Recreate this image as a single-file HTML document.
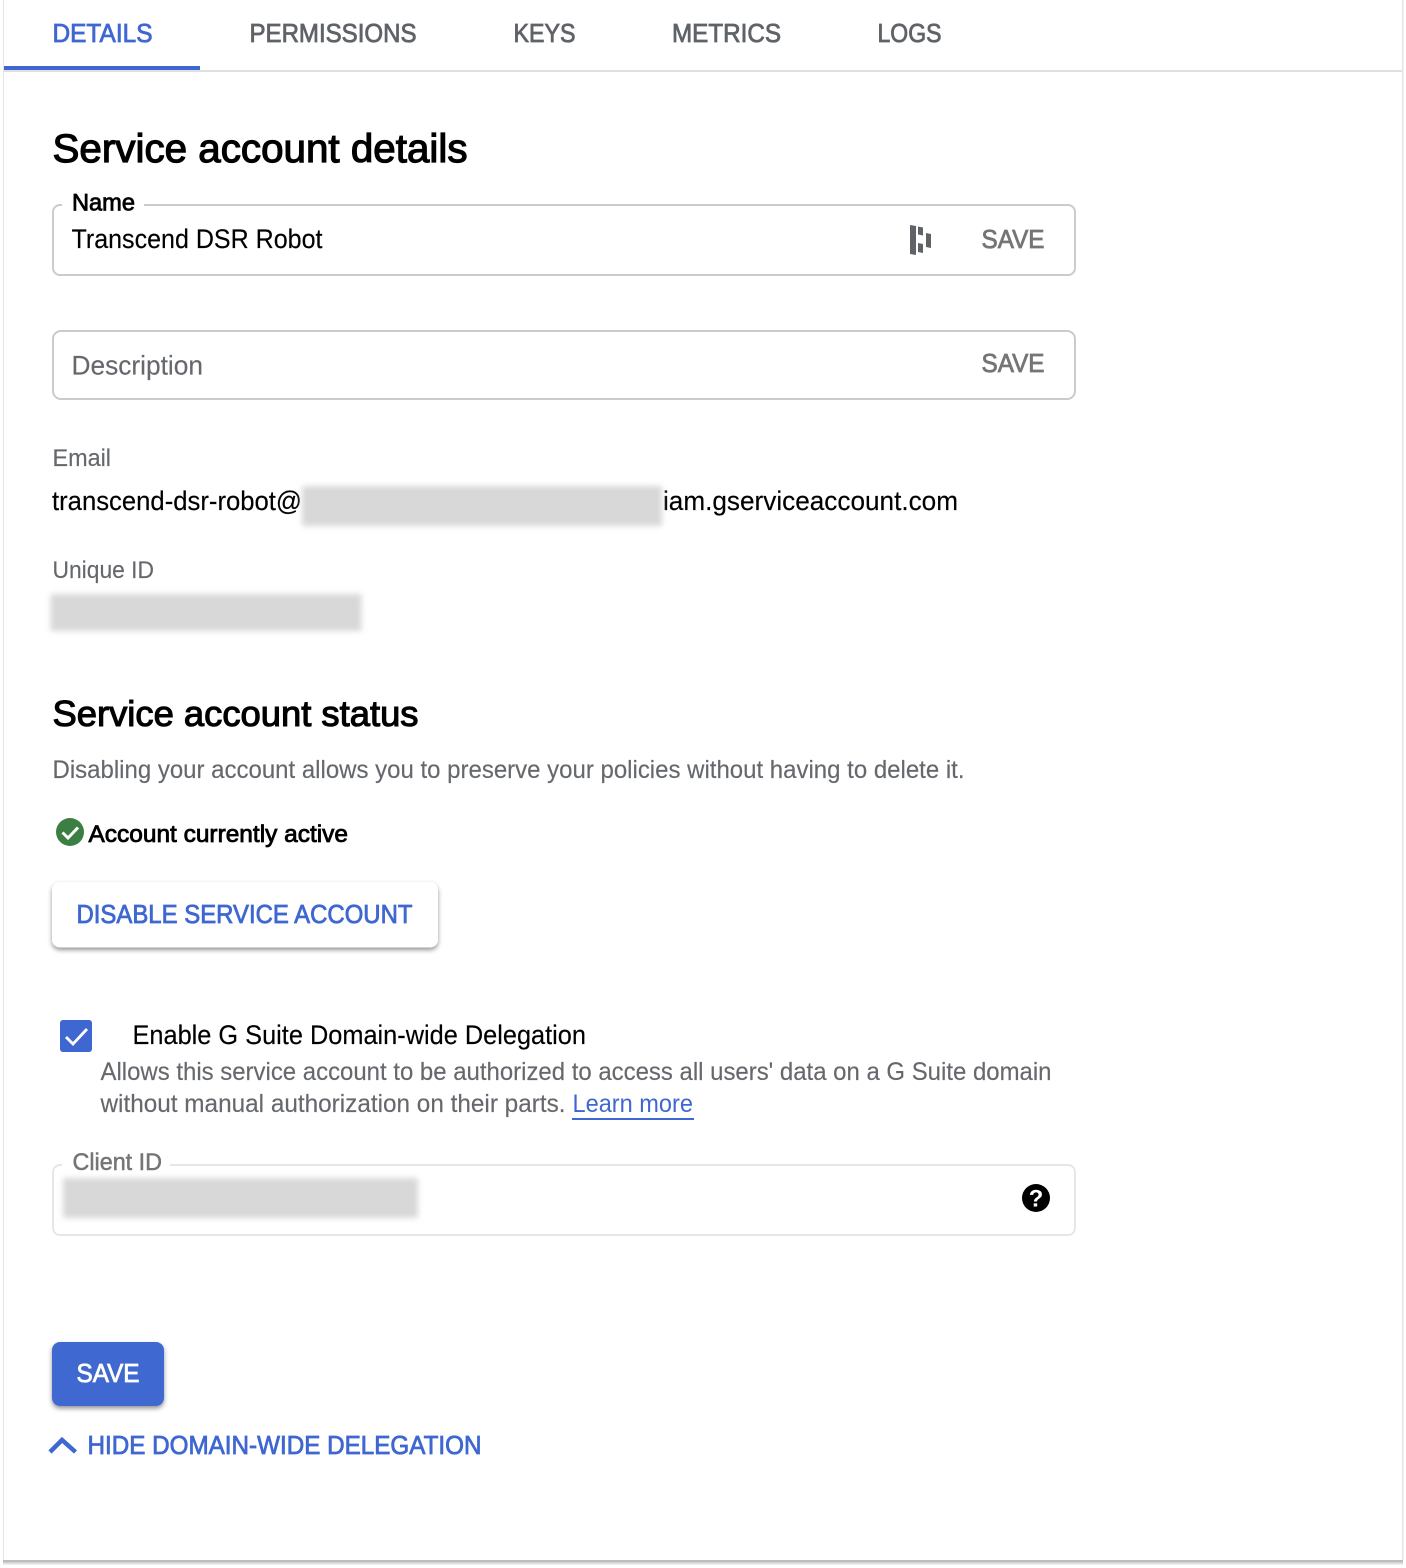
<!DOCTYPE html>
<html><head><meta charset="utf-8"><title>Service account details</title>
<style>
html,body{margin:0;padding:0;background:#fff;width:1406px;height:1568px;overflow:hidden}
svg{display:block;position:absolute;left:0;top:0}
text{font-family:"Liberation Sans",Arial,sans-serif;font-size:25px;fill:#000}
.m{stroke-width:.8px;paint-order:stroke}
.blue{fill:#3f67d1;stroke:#3f67d1}
.grey{fill:#5f6368;stroke:#5f6368}
.g2{fill:#65686c;stroke:#65686c;stroke-width:.15px}
.g3{fill:#757575;stroke:#757575}
.blk{stroke:#000}
.wht{fill:#fff;stroke:#fff}
</style></head><body>
<svg width="1406" height="1568" viewBox="0 0 1406 1568" xmlns="http://www.w3.org/2000/svg">
<defs>
<filter id="b" x="-10%" y="-40%" width="120%" height="180%"><feGaussianBlur stdDeviation="2.8"/></filter>
<filter id="s1" x="-10%" y="-30%" width="120%" height="170%"><feDropShadow dx="0" dy="2.500" stdDeviation="2.500" flood-color="#000" flood-opacity=".42"/></filter>
</defs>
<rect width="1406" height="1568" fill="#fff"/>
<!-- frame -->
<rect x="3" y="0" width="1" height="1560" fill="#e4e4e4"/>
<rect x="1402" y="0" width="1.5" height="1560" fill="#e4e4e4"/>
<rect x="3" y="1560" width="1400" height="2" fill="#bdbdbd"/>
<rect x="3" y="1562" width="1400" height="1.5" fill="#d2d2d2"/>
<rect x="3" y="1563.500" width="1400" height="1.5" fill="#efefef"/>
<!-- tabs -->
<rect x="4" y="70" width="1398" height="2" fill="#e0e0e0"/>
<rect x="4" y="66" width="196" height="4" fill="#3f67d1"/>
<text class="m blue" x="52.500" y="42" style="font-size:26px" textLength="100" lengthAdjust="spacingAndGlyphs">DETAILS</text>
<text class="m grey" x="249.500" y="42" style="font-size:26px" textLength="167" lengthAdjust="spacingAndGlyphs">PERMISSIONS</text>
<text class="m grey" x="513.500" y="42" style="font-size:26px" textLength="62" lengthAdjust="spacingAndGlyphs">KEYS</text>
<text class="m grey" x="672" y="42" style="font-size:26px" textLength="109" lengthAdjust="spacingAndGlyphs">METRICS</text>
<text class="m grey" x="877.500" y="42" style="font-size:26px" textLength="64" lengthAdjust="spacingAndGlyphs">LOGS</text>
<!-- details -->
<text class="m blk" x="52.500" y="162" style="font-size:40px;stroke-width:1.2px" textLength="415" lengthAdjust="spacingAndGlyphs">Service account details</text>
<!-- name field -->
<path d="M62 205H60a7 7 0 0 0-7 7v56a7 7 0 0 0 7 7H1068a7 7 0 0 0 7-7V212a7 7 0 0 0-7-7H144" fill="none" stroke="#cbcbcb" stroke-width="2"/>
<text class="m blk" x="72" y="210.500" style="font-size:24px" textLength="63" lengthAdjust="spacingAndGlyphs">Name</text>
<text x="71.500" y="248" style="font-size:26.500px;stroke:#000;stroke-width:.15px" textLength="251" lengthAdjust="spacingAndGlyphs">Transcend DSR Robot</text>
<path d="M910 225l6 1v29l-6-1zM918 226.500l5 1v8l-5-1zM918 243l5 1v9l-5-1zM926 233l5 1v14l-5-1z" fill="#5f6368"/>
<text class="m g3" x="981.500" y="248" style="font-size:26px" textLength="63" lengthAdjust="spacingAndGlyphs">SAVE</text>
<!-- description -->
<rect x="53" y="331" width="1022" height="68" rx="8" fill="none" stroke="#cbcbcb" stroke-width="2"/>
<text class="g2" x="71.500" y="374.500" style="font-size:26.500px" textLength="131.500" lengthAdjust="spacingAndGlyphs">Description</text>
<text class="m g3" x="981.500" y="372" style="font-size:26px" textLength="63" lengthAdjust="spacingAndGlyphs">SAVE</text>
<!-- email -->
<text class="g2" x="52.500" y="466" style="font-size:24px" textLength="58.500" lengthAdjust="spacingAndGlyphs">Email</text>
<text x="52" y="510" style="font-size:26.500px;stroke:#000;stroke-width:.15px" textLength="250" lengthAdjust="spacingAndGlyphs">transcend-dsr-robot@</text>
<text x="663" y="510" style="font-size:26.500px;stroke:#000;stroke-width:.15px" textLength="295" lengthAdjust="spacingAndGlyphs">iam.gserviceaccount.com</text>
<rect x="302" y="486" width="360" height="40" fill="#d8d8d8" filter="url(#b)"/>
<!-- unique id -->
<text class="g2" x="52.500" y="578" style="font-size:24px" textLength="101.500" lengthAdjust="spacingAndGlyphs">Unique ID</text>
<rect x="50.500" y="594" width="311" height="37" fill="#d8d8d8" filter="url(#b)"/>
<!-- status -->
<text class="m blk" x="52.500" y="726" style="font-size:36px;stroke-width:1.1px" textLength="366" lengthAdjust="spacingAndGlyphs">Service account status</text>
<text class="g2" x="52.500" y="778" style="font-size:25px" textLength="912" lengthAdjust="spacingAndGlyphs">Disabling your account allows you to preserve your policies without having to delete it.</text>
<circle cx="70" cy="832" r="14" fill="#3c7f43"/>
<path d="M62.500 832.500l5.500 5.500 10-10.500" fill="none" stroke="#fff" stroke-width="3"/>
<text class="m blk" x="88.500" y="842" style="font-size:24px" textLength="259.500" lengthAdjust="spacingAndGlyphs">Account currently active</text>
<!-- disable button -->
<rect x="52" y="882" width="386" height="65.500" rx="8" fill="#fff" filter="url(#s1)"/>
<text class="m blue" x="76.500" y="923" style="font-size:26px" textLength="336" lengthAdjust="spacingAndGlyphs">DISABLE SERVICE ACCOUNT</text>
<!-- delegation -->
<rect x="60" y="1020" width="32" height="32" rx="3" fill="#3f67d1"/>
<path d="M66 1037l7 7 14-15" fill="none" stroke="#fff" stroke-width="2.800"/>
<text x="132.500" y="1044" style="font-size:26.500px;stroke:#000;stroke-width:.15px" textLength="453.500" lengthAdjust="spacingAndGlyphs">Enable G Suite Domain-wide Delegation</text>
<text class="g2" x="100.500" y="1080" style="font-size:25px" textLength="951" lengthAdjust="spacingAndGlyphs">Allows this service account to be authorized to access all users' data on a G Suite domain</text>
<text class="g2" x="100.500" y="1112" style="font-size:25px" textLength="465" lengthAdjust="spacingAndGlyphs">without manual authorization on their parts.</text>
<text x="572.500" y="1112" style="font-size:25px;fill:#3f67d1" textLength="120.500" lengthAdjust="spacingAndGlyphs">Learn more</text>
<rect x="572" y="1118" width="122" height="2" fill="#3f67d1"/>
<!-- client id -->
<path d="M62 1165H60a7 7 0 0 0-7 7v56a7 7 0 0 0 7 7H1068a7 7 0 0 0 7-7V1172a7 7 0 0 0-7-7H170" fill="none" stroke="#e6e6e6" stroke-width="2"/>
<text class="m g3" x="72.500" y="1170" style="font-size:24px;stroke-width:.5px" textLength="89.500" lengthAdjust="spacingAndGlyphs">Client ID</text>
<rect x="63" y="1178" width="355" height="40" fill="#d8d8d8" filter="url(#b)"/>
<circle cx="1036" cy="1198" r="14" fill="#000"/>
<text x="1036" y="1206.500" text-anchor="middle" style="font-size:24px;font-weight:bold;fill:#fff">?</text>
<!-- save -->
<rect x="52" y="1342" width="112" height="64" rx="8" fill="#3f67d1" filter="url(#s1)"/>
<text class="m wht" x="76.500" y="1382" style="font-size:26px" textLength="63" lengthAdjust="spacingAndGlyphs">SAVE</text>
<!-- hide -->
<path d="M50 1452l12-12 13.500 12" fill="none" stroke="#3f67d1" stroke-width="4.500"/>
<text class="m blue" x="87.500" y="1454" style="font-size:26px" textLength="394" lengthAdjust="spacingAndGlyphs">HIDE DOMAIN-WIDE DELEGATION</text>
</svg>
</body></html>
